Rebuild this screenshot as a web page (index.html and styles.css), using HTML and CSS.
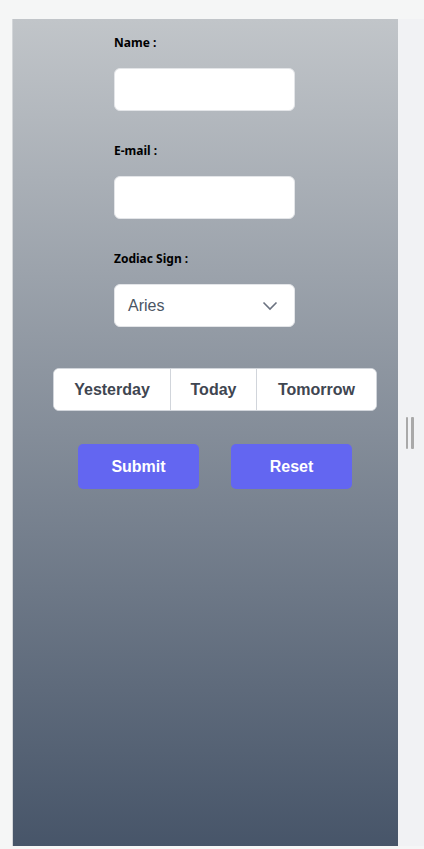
FILE: index.html
```html
<!DOCTYPE html>
<html lang="en">
<head>
<meta charset="utf-8">
<title>Horoscope</title>
<link rel="stylesheet" href="styles.css">
</head>
<body>
<div class="frame">
  <main class="panel">
    <form class="form">
      <div class="field">
        <label class="label" for="name">Name :</label>
        <input class="input" id="name" type="text">
      </div>
      <div class="field">
        <label class="label" for="email">E-mail :</label>
        <input class="input" id="email" type="email">
      </div>
      <div class="field">
        <label class="label" for="sign">Zodiac Sign :</label>
        <div class="select">
          <span class="select-text">Aries</span>
          <svg class="chevron" width="16" height="10" viewBox="0 0 16 10"><path d="M1.5 1.5 L8 8 L14.5 1.5" fill="none" stroke="#6b7280" stroke-width="1.6"/></svg>
        </div>
      </div>
    </form>
    <div class="segments">
      <button class="seg seg-y" type="button">Yesterday</button>
      <button class="seg seg-t" type="button">Today</button>
      <button class="seg seg-m" type="button">Tomorrow</button>
    </div>
    <div class="actions">
      <button class="btn" type="button">Submit</button>
      <button class="btn" type="button">Reset</button>
    </div>
  </main>
  <aside class="side">
    <div class="handle"><span class="bar"></span><span class="bar"></span></div>
  </aside>
</div>
</body>
</html>
```
FILE: styles.css
```css
html, body {
  margin: 0;
  padding: 0;
}
body {
  background: #f5f6f6;
  font-family: "Liberation Sans", Arial, sans-serif;
}
.frame {
  margin-top: 19px;
  margin-left: 12px;
  height: 827px;
  display: flex;
}
.panel {
  width: 385px;
  border-left: 1px solid #d3d6d9;
  background: linear-gradient(to bottom, #c1c5c9 0%, #475569 100%);
  display: flex;
  flex-direction: column;
}
.form {
  padding: 16px 0 0 101px;
  display: flex;
  flex-direction: column;
  gap: 32px;
}
.field {
  display: flex;
  flex-direction: column;
}
.label {
  font-family: "Noto Sans", "DejaVu Sans", sans-serif;
  font-weight: 700;
  font-size: 12px;
  line-height: 16px;
  color: #000;
  margin-bottom: 17px;
}
.input {
  box-sizing: border-box;
  width: 181px;
  height: 43px;
  margin: 0;
  border: 1px solid #e3e5e8;
  border-radius: 6px;
  background: #fff;
  padding: 0 12px;
}
.select {
  box-sizing: border-box;
  width: 181px;
  height: 43px;
  border: 1px solid #e3e5e8;
  border-radius: 6px;
  background: #fff;
  display: flex;
  align-items: center;
  justify-content: space-between;
  padding: 0 16px 0 13px;
}
.select-text {
  font-size: 16px;
  color: #4b5563;
}
.chevron {
  display: block;
}
.segments {
  margin: 41px 0 0 40px;
  width: 324px;
  height: 43px;
  box-sizing: border-box;
  display: flex;
  border: 1px solid #d1d5db;
  border-radius: 6px;
  background: #fff;
  overflow: hidden;
}
.seg {
  margin: 0;
  border: 0;
  background: #fff;
  font-family: "Liberation Sans", Arial, sans-serif;
  font-weight: 700;
  font-size: 16px;
  color: #3f4651;
  padding: 0;
  height: 100%;
}
.seg-y { width: 116px; }
.seg-t { width: 87px; border-left: 1px solid #d1d5db; border-right: 1px solid #d1d5db; }
.seg-m { flex: 1; }
.actions {
  margin: 33px 0 0 65px;
  display: flex;
  gap: 32px;
}
.btn {
  width: 121px;
  height: 45px;
  border: 0;
  border-radius: 5px;
  background: #6366f1;
  color: #fff;
  font-family: "Liberation Sans", Arial, sans-serif;
  font-weight: 700;
  font-size: 16px;
  padding: 0;
}
.side {
  flex: 1;
  background: #f1f2f4;
  display: flex;
  align-items: center;
}
.handle {
  margin-left: 8px;
  display: flex;
  gap: 3px;
}
.bar {
  width: 2px;
  height: 32px;
  background: #a9a9a9;
  border-radius: 1px;
}
.bar + .bar { width: 3px; }
```
